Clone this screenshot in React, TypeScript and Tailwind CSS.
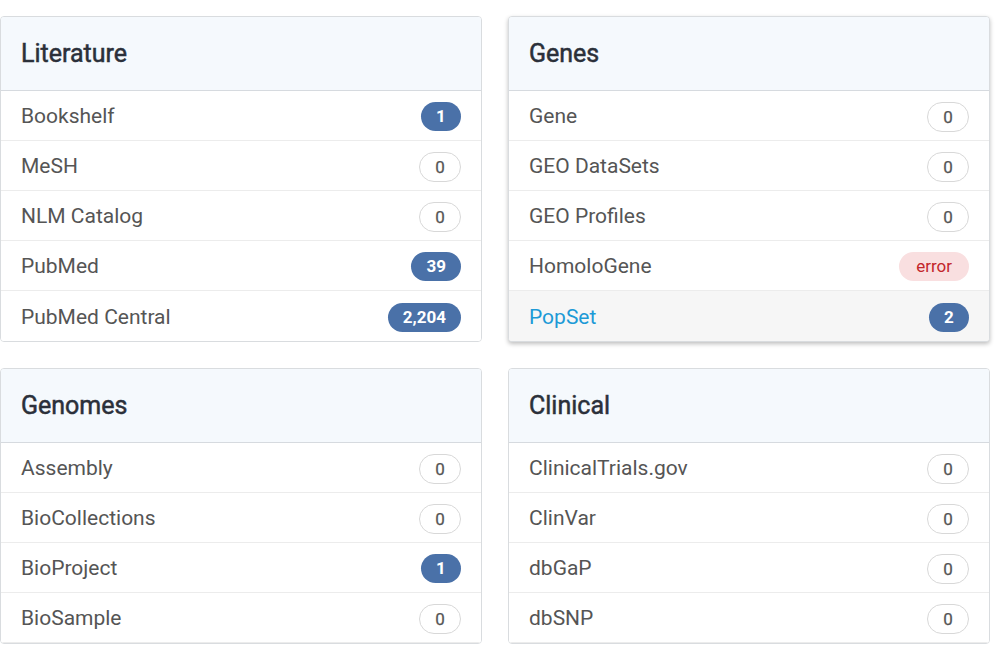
type Item = { name: string; count: string; kind?: 'zero' | 'hit' | 'error'; active?: boolean };

type Panel = { title: string; items: Item[]; raised?: boolean; clipped?: boolean };

const panels: Panel[] = [
  {
    title: 'Literature',
    items: [
      { name: 'Bookshelf', count: '1', kind: 'hit' },
      { name: 'MeSH', count: '0', kind: 'zero' },
      { name: 'NLM Catalog', count: '0', kind: 'zero' },
      { name: 'PubMed', count: '39', kind: 'hit' },
      { name: 'PubMed Central', count: '2,204', kind: 'hit' },
    ],
  },
  {
    title: 'Genes',
    raised: true,
    items: [
      { name: 'Gene', count: '0', kind: 'zero' },
      { name: 'GEO DataSets', count: '0', kind: 'zero' },
      { name: 'GEO Profiles', count: '0', kind: 'zero' },
      { name: 'HomoloGene', count: 'error', kind: 'error' },
      { name: 'PopSet', count: '2', kind: 'hit', active: true },
    ],
  },
  {
    title: 'Genomes',
    clipped: true,
    items: [
      { name: 'Assembly', count: '0', kind: 'zero' },
      { name: 'BioCollections', count: '0', kind: 'zero' },
      { name: 'BioProject', count: '1', kind: 'hit' },
      { name: 'BioSample', count: '0', kind: 'zero' },
    ],
  },
  {
    title: 'Clinical',
    clipped: true,
    items: [
      { name: 'ClinicalTrials.gov', count: '0', kind: 'zero' },
      { name: 'ClinVar', count: '0', kind: 'zero' },
      { name: 'dbGaP', count: '0', kind: 'zero' },
      { name: 'dbSNP', count: '0', kind: 'zero' },
    ],
  },
];

function Badge({ item }: { item: Item }) {
  if (item.kind === 'error') {
    return (
      <span className="h-[29px] px-[17px] rounded-full bg-[#f9dfe0] text-[#c3262b] text-[17px] leading-[29px]">
        {item.count}
      </span>
    );
  }
  if (item.kind === 'zero') {
    return (
      <span className="h-[30px] min-w-[42px] px-[14px] rounded-full border border-[#d8d8d8] bg-white text-[#555] text-[17px] font-normal [-webkit-text-stroke:0.25px_#555] leading-[28px] text-center">
        {item.count}
      </span>
    );
  }
  return (
    <span className="h-[29px] min-w-[40px] px-[15px] rounded-full bg-[#4a71a8] text-white text-[17px] font-bold leading-[29px] text-center">
      {item.count}
    </span>
  );
}

function Card({ panel }: { panel: Panel }) {
  return (
    <div
      className={
        panel.raised
          ? 'bg-white border border-[#d9dcdf] rounded-[4px] overflow-hidden shadow-[0_2px_4px_rgba(0,0,0,0.25)]'
          : 'bg-white border border-[#d9dcdf] rounded-[4px] overflow-hidden'
      }
    >
      <div className="h-[74px] bg-[#f5f9fd] border-b border-[#d6dadf] flex items-center px-5">
        <h2 className="text-[25px] font-normal text-[#2b303a] [-webkit-text-stroke:0.5px_#2b303a]">{panel.title}</h2>
      </div>
      {panel.items.map((item, i) => (
        <div
          key={item.name}
          className={
            (item.active ? 'bg-[#f6f6f6] ' : 'bg-white ') +
            (panel.clipped || i < panel.items.length - 1 ? 'border-b border-[#ececec] ' : '') +
            'h-[50px] flex items-center justify-between pl-5 pr-5 pt-[2px]'
          }
        >
          <span className={item.active ? 'text-[21px] text-[#1d9ad6] pt-[1px]' : 'text-[21px] text-[#555] pt-[1px]'}>
            {item.name}
          </span>
          <Badge item={item} />
        </div>
      ))}
    </div>
  );
}

export default function App() {
  return (
    <div className="bg-white h-[646px] overflow-hidden font-['Roboto',sans-serif] pt-4 pr-[11px]">
      <div className="grid grid-cols-2 gap-x-[26px] gap-y-[26px] w-[990px]">
        {panels.map(p => (
          <Card key={p.title} panel={p} />
        ))}
      </div>
    </div>
  );
}
